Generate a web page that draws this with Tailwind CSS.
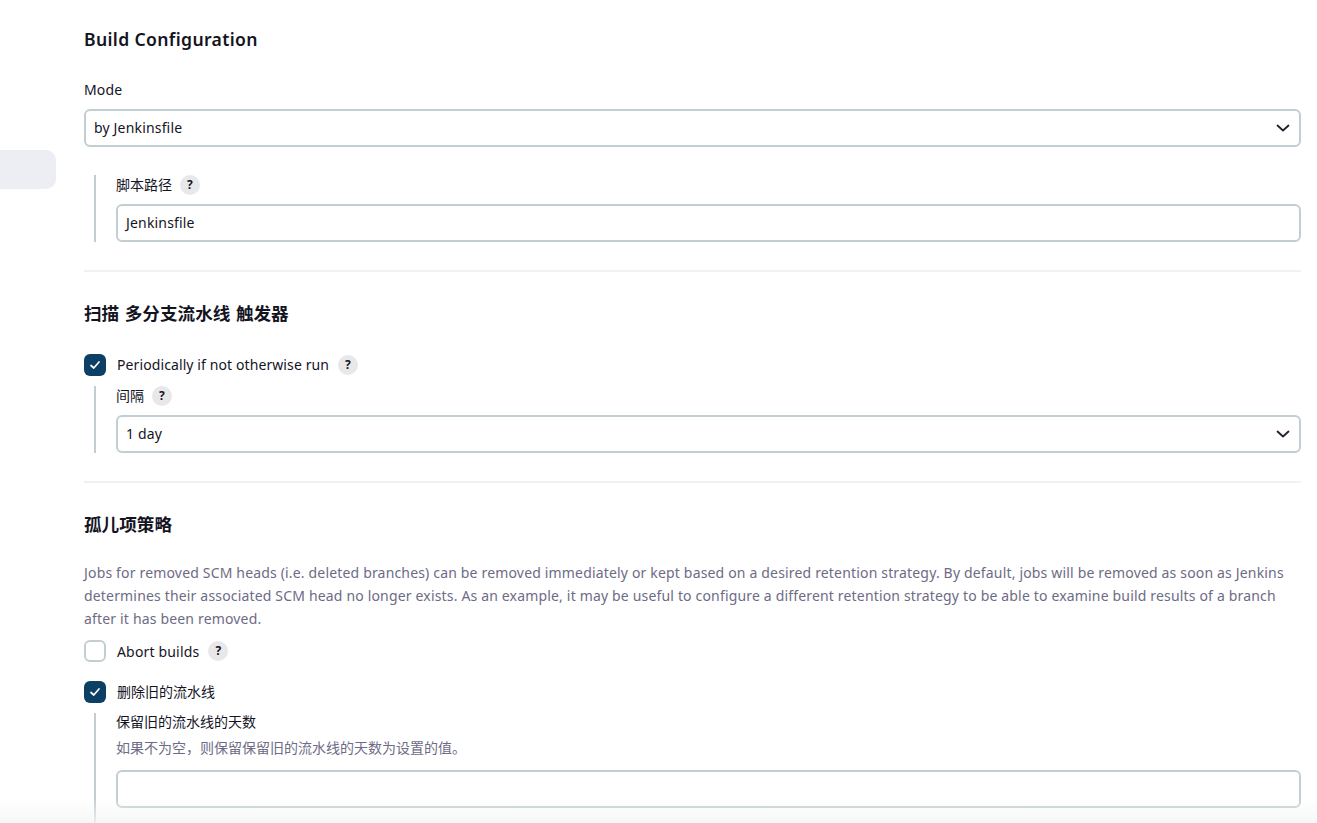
<!doctype html>
<html>
<head>
    <meta charset="UTF-8">
    <script src="https://cdn.jsdelivr.net/npm/@tailwindcss/browser@4"></script>
</head>
<body class="bg-white overflow-hidden h-[823px] relative text-[14px] tracking-[0.17px] text-[#14141f] font-['Noto_Sans','Noto_Sans_CJK_SC',sans-serif]">
<div class="flex gap-[28px] h-[823px] overflow-hidden">
    <aside class="w-[56px] shrink-0 pt-[150px]">
        <div class="h-[39px] bg-[#edeef3] rounded-r-[10px]"></div>
    </aside>
    <main class="w-[1217px] shrink-0 pt-[27px]">
        <h2 class="text-[17.6px] leading-[24px] font-semibold tracking-[0.35px]">Build Configuration</h2>

        <label class="block mt-[29px] h-[20px] leading-[20px]">Mode</label>
        <div class="mt-[9px] h-[38px] border-2 border-[#c3ced2] rounded-[6px] flex items-center justify-between pl-[8px] pr-[9px]">
            <span class="pb-[2px]">by Jenkinsfile</span>
            <svg class="w-[14px] h-[14px]" viewBox="0 0 14 14" fill="none" stroke="#20202e" stroke-width="1.8" stroke-linecap="round" stroke-linejoin="round"><path d="M1.5 4.5 7 9.5l5.5-5"/></svg>
        </div>

        <div class="mt-[28px] ml-[10px] pl-[20px] border-l-2 border-[#c3ced2] h-[67px]">
            <div class="flex items-center gap-[8px] h-[20px]">
                <span class="pb-[2px] tracking-normal">脚本路径</span>
                <span class="w-[20px] h-[20px] rounded-full bg-[#e8e8ea] flex items-center justify-center text-[12px] font-bold">?</span>
            </div>
            <div class="mt-[9px] h-[38px] border-2 border-[#c3ced2] rounded-[6px] flex items-center pl-[8px]"><span class="pb-[2px]">Jenkinsfile</span></div>
        </div>

        <div class="mt-[28px] h-[2px] bg-[#f1f1f4]"></div>

        <h2 class="mt-[29px] text-[17.6px] leading-[24px] font-semibold tracking-normal [word-spacing:1px]">扫描 多分支流水线 触发器</h2>

        <div class="mt-[29px] flex items-center h-[22px]">
            <span class="w-[22px] h-[22px] rounded-[6px] bg-[#0b3f63] flex items-center justify-center">
                <svg class="w-[12px] h-[12px]" viewBox="0 0 12 12" fill="none" stroke="#fff" stroke-width="1.7" stroke-linecap="round" stroke-linejoin="round"><path d="M2 6.5 4.8 9 10 3"/></svg>
            </span>
            <span class="ml-[11px] pb-[2px] tracking-[0.1px]">Periodically if not otherwise run</span>
            <span class="ml-[9px] w-[20px] h-[20px] rounded-full bg-[#e8e8ea] flex items-center justify-center text-[12px] font-bold">?</span>
        </div>

        <div class="mt-[10px] ml-[10px] pl-[20px] border-l-2 border-[#c3ced2] h-[67px]">
            <div class="flex items-center gap-[8px] h-[20px]">
                <span class="pb-[2px] tracking-normal">间隔</span>
                <span class="w-[20px] h-[20px] rounded-full bg-[#e8e8ea] flex items-center justify-center text-[12px] font-bold">?</span>
            </div>
            <div class="mt-[9px] h-[38px] border-2 border-[#c3ced2] rounded-[6px] flex items-center justify-between pl-[8px] pr-[9px]">
                <span class="pb-[2px]">1 day</span>
                <svg class="w-[14px] h-[14px]" viewBox="0 0 14 14" fill="none" stroke="#20202e" stroke-width="1.8" stroke-linecap="round" stroke-linejoin="round"><path d="M1.5 4.5 7 9.5l5.5-5"/></svg>
            </div>
        </div>

        <div class="mt-[28px] h-[2px] bg-[#f1f1f4]"></div>

        <h2 class="mt-[29px] text-[17.6px] leading-[24px] font-semibold tracking-normal">孤儿项策略</h2>

        <p class="mt-[25px] leading-[23px] text-[#6d6b85]">Jobs for removed SCM heads (i.e. deleted branches) can be removed immediately or kept based on a desired retention strategy. By default, jobs will be removed as soon as Jenkins determines their associated SCM head no longer exists. As an example, it may be useful to configure a different retention strategy to be able to examine build results of a branch after it has been removed.</p>

        <div class="mt-[10px] flex items-center h-[22px]">
            <span class="w-[22px] h-[22px] rounded-[6px] border-2 border-[#c3ced2] bg-white"></span>
            <span class="ml-[11px]">Abort builds</span>
            <span class="ml-[9px] w-[20px] h-[20px] rounded-full bg-[#e8e8ea] flex items-center justify-center text-[12px] font-bold">?</span>
        </div>

        <div class="mt-[19px] flex items-center h-[22px]">
            <span class="w-[22px] h-[22px] rounded-[6px] bg-[#0b3f63] flex items-center justify-center">
                <svg class="w-[12px] h-[12px]" viewBox="0 0 12 12" fill="none" stroke="#fff" stroke-width="1.7" stroke-linecap="round" stroke-linejoin="round"><path d="M2 6.5 4.8 9 10 3"/></svg>
            </span>
            <span class="ml-[11px] pb-[2px] tracking-normal">删除旧的流水线</span>
        </div>

        <div class="mt-[10px] ml-[10px] pl-[20px] border-l-2 border-[#c3ced2] h-[120px] tracking-normal">
            <div class="h-[19px] leading-[17px]">保留旧的流水线的天数</div>
            <div class="mt-[6px] h-[20px] leading-[20px] text-[#6d6b85]">如果不为空，则保留保留旧的流水线的天数为设置的值。</div>
            <div class="mt-[12px] h-[38px] border-2 border-[#c3ced2] rounded-[6px]"></div>
        </div>
    </main>
</div>
<div class="absolute left-0 right-0 bottom-0 h-[24px] bg-gradient-to-b from-white/0 to-[#f4f5f6]/80 pointer-events-none"></div>
</body>
</html>
